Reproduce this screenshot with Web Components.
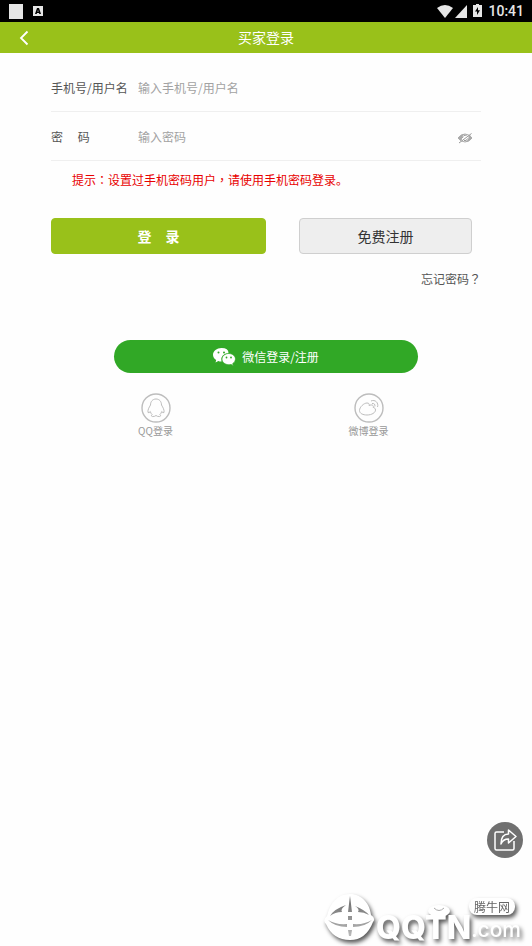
<!DOCTYPE html>
<html lang="zh-CN">
<head>
<meta charset="utf-8">
<meta name="viewport" content="width=device-width, initial-scale=1">
<title>买家登录</title>
<style>
  html, body { margin: 0; height: 100%; }
  body { background: #fefefe; font-family: "Noto Sans CJK SC", sans-serif; font-size: 12px; color: #555; }
</style>
</head>
<body>
<login-page></login-page>
<script>
const define = (name, html, init) => {
  const template = document.createElement('template');
  template.innerHTML = html;
  customElements.define(name, class extends HTMLElement {
    constructor() {
      super();
      this.attachShadow({ mode: 'open' }).append(template.content.cloneNode(true));
    }
    connectedCallback() { if (init) init(this, this.shadowRoot); }
  });
};

define('status-bar', `
<style>
  :host { display: flex; align-items: center; height: 22px; background: #000; color: #e6e6e6; padding: 0 8px; font: 500 14px/22px Roboto, sans-serif; }
  .grow { flex: 1; }
  svg { display: block; fill: #e6e6e6; }
  .left { display: flex; gap: 9px; align-items: center; }
  .right { display: flex; gap: 6px; align-items: center; }
  .signal { display: flex; gap: 2px; }
</style>
<div class="left">
  <svg width="16" height="16" viewBox="0 0 16 16"><path d="M1 1h14v15H1z"/></svg>
  <svg width="10" height="10" viewBox="0 0 10 10"><path fill-rule="evenodd" d="M0 0h10v10H0zM4 2 2 8h1.7l.3-1h2l.3 1H8L6 2zM5 3.7l.5 2h-1z"/></svg>
</div>
<div class="grow"></div>
<div class="right">
  <div class="signal">
    <svg width="16" height="13" viewBox="0 0 16 13"><path d="M8 13 0 3Q8-3 16 3z"/></svg>
    <svg width="12" height="13" viewBox="0 0 12 13"><path d="M12 0v13H0z"/></svg>
  </div>
  <svg width="9" height="14" viewBox="0 0 9 14"><path fill-rule="evenodd" d="M3 1V0h3v1h3v12H0V1h3zM5 3 2 7.500h2V11l3-4.800H5z"/></svg>
  <span>10:41</span>
</div>`);

define('title-bar', `
<style>
  :host { display: grid; grid-template-columns: 48px 1fr 48px; align-items: center; height: 31px; background: #99c11a; color: #fff; }
  h1 { margin: 0; font-size: 14px; font-weight: 400; line-height: 30px; height: 31px; text-align: center; }
  button { border: 0; background: none; padding: 0; height: 31px; color: inherit; display: grid; place-items: center; }
</style>
<button aria-label="返回"><svg width="10" height="16" viewBox="0 0 10 16"><path d="M8.500 1.500 2 8l6.500 6.500" fill="none" stroke="currentColor" stroke-width="1.8"/></svg></button>
<h1><slot></slot></h1>`);

define('field-row', `
<style>
  :host { display: flex; align-items: center; height: 48px; border-bottom: 1px solid #efefef; }
  label { flex: 0 0 87px; white-space: nowrap; }
  input { flex: 1; min-width: 0; border: 0; padding: 0; outline: 0; background: none; font: inherit; color: inherit; height: 24px; }
  input::placeholder { color: #a2a2a2; opacity: 1; }
</style>
<label for="field"></label><input id="field"><slot></slot>`, (el, root) => {
  const input = root.querySelector('input');
  root.querySelector('label').textContent = el.getAttribute('label');
  input.placeholder = el.getAttribute('placeholder');
  input.type = el.getAttribute('type') || 'text';
});

define('eye-toggle', `
<style>
  :host { display: block; padding: 3px 8px 0 0; }
  button { display: block; border: 0; padding: 0; background: none; }
  svg { display: block; }
</style>
<button aria-label="显示密码"><svg width="16" height="12" viewBox="0 0 16 12"><path d="M1 6Q8-2 15 6 8 14 1 6z" fill="#fff" stroke="#aaa"/><path d="M1 6Q4 1.500 8.500 2 4.500 3 5 7.500L3.500 9zM15 6q-3 4.500-7 4 4-1.500 3.500-6L13 3z" fill="#aaa"/><path d="M5.500 6a2.800 2.800 0 0 1 4-2.500M10.500 6.500a2.800 2.800 0 0 1-3.500 2" fill="none" stroke="#999"/><path d="M2 11 14.500 1.500" stroke="#999"/></svg></button>`);

define('action-button', `
<style>
  :host { display: block; }
  button { box-sizing: border-box; width: 100%; height: 36px; border: 1px solid #cfcfcf; border-radius: 4px; background: #eee; color: #333; font: inherit; font-size: 14px; line-height: 20px; padding: 0; }
  :host([kind="primary"]) button { border-color: #99c11a; background: #99c11a; color: #fff; font-weight: 700; }
  :host([kind="wechat"]) button { height: 33px; border: 0; border-radius: 17px; background: #31a826; color: #fff; font-size: 12px; display: flex; gap: 6px; align-items: center; justify-content: center; }
</style>
<button><slot></slot></button>`);

define('social-link', `
<style>
  :host { display: block; }
  a { display: flex; flex-direction: column; align-items: center; color: #999; text-decoration: none; font-size: 10px; line-height: 16px; }
</style>
<a href="#"><slot name="icon"></slot><slot></slot></a>`);

define('share-button', `
<style>
  :host { position: fixed; right: 9px; bottom: 88px; }
  button { display: grid; place-items: center; width: 36px; height: 36px; border: 0; border-radius: 50%; padding: 0; background: #707070; }
</style>
<button aria-label="分享"><svg width="24" height="24" viewBox="0 0 24 24" fill="none" stroke="#fff" stroke-width="1.5" stroke-linejoin="round"><path d="M11 4H3.500Q2 4 2 5.500v15Q2 22 3.500 22h16q1.500 0 1.500-1.500V13"/><path d="M8 16Q8 6 15.500 6V2L23 8.500 15.500 15v-4Q10 11 8 16z"/></svg></button>`);

define('site-mark', `
<style>
  :host { position: fixed; right: 0; bottom: 0; width: 212px; height: 62px; color: #fff; pointer-events: none; filter: drop-shadow(2px 3px 2px rgba(0,0,0,.65)); }
  svg { position: absolute; left: 0; top: 0; }
  .name { position: absolute; left: 56px; bottom: 6px; display: flex; align-items: flex-end; font: 800 32px/24px Inter, sans-serif; }
  .com { font-weight: 500; font-size: 21px; line-height: 20px; }
  .badge { position: absolute; right: 17px; top: 14px; padding: 0 5px; border-radius: 8px; background: #fff; color: #666; font-size: 12px; line-height: 17px; }
</style>
<svg width="140" height="62" viewBox="0 0 140 62">
  <defs><linearGradient id="g" x2="0" y2="1"><stop stop-color="#666"/><stop offset="1" stop-color="#bbb"/></linearGradient></defs>
  <path d="M30 10C42 10 50 20 51 31Q56 34 53 38 46 56 30 56 13 56 6 40 2 36 7 32C10 19 18 10 30 10z" fill="#fff"/>
  <path d="M30 12 32 28H28zM10 32Q14 25 26 21 20 25 22 28 15 28 10 32zM49 31Q45 26 35 22 40 25 38 28 44 28 49 31zM8 36Q16 41 27 40v3Q15 43 8 36zM52 36Q44 41 33 40v3Q45 43 52 36zM28 32h4v4h-4zM28 46h4l-1 6h-2z" fill="url(#g)"/>
  <ellipse cx="119" cy="27" rx="11" ry="6" fill="#fff"/><path d="M114 24q5 5 10 0" fill="none" stroke="#aaa"/>
</svg>
<div class="name"><span>QQTN</span><span class="com">.com</span></div>
<span class="badge">腾牛网</span>`);

define('login-page', `
<style>
  :host { display: block; min-height: 100%; }
  form { display: block; margin: 0; padding-top: 10px; }
  .fields { margin: 0 51px; }
  .tc { font-family: "Noto Sans CJK TC", sans-serif; }
  .tip { margin: 0 21px; padding-top: 9px; line-height: 20px; color: #e80000; }
  .actions { display: grid; grid-template-columns: 215fr 173fr; gap: 33px; margin: 28px 60px 0 51px; }
  .forgot { display: flex; justify-content: flex-end; margin: 15px 51px 0; }
  .forgot a { color: #555; text-decoration: none; line-height: 20px; }
  .wechat { width: 57%; margin: 51px auto 0; }
  .social { display: grid; grid-template-columns: 1fr 1fr; margin: 20px 57px 0 49px; }
  svg { display: block; }
</style>
<status-bar></status-bar>
<title-bar>买家登录</title-bar>
<form>
  <div class="fields">
    <field-row label="手机号/用户名" placeholder="输入手机号/用户名"></field-row>
    <field-row label="密&emsp;&nbsp;码" placeholder="输入密码" type="password"><eye-toggle></eye-toggle></field-row>
    <p class="tip">提示<span class="tc" lang="zh-TW">：</span>设置过手机密码用户<span class="tc" lang="zh-TW">，</span>请使用手机密码登录。</p>
  </div>
  <div class="actions">
    <action-button kind="primary">登　录</action-button>
    <action-button>免费注册</action-button>
  </div>
  <div class="forgot"><a href="#">忘记密码<span class="tc" lang="zh-TW">？</span></a></div>
  <action-button class="wechat" kind="wechat">
    <svg width="23" height="18" viewBox="0 0 23 18"><path d="M8.500 0C3.800 0 0 3 0 6.800 0 9 1.200 10.800 3.200 12L2.500 14.500 5.300 13Q7 13.600 8.500 13.500 7 6 15.500 5 15.500 0 8.500 0z" fill="#fff"/><path d="M15.800 5.500c-3.800 0-6.800 2.500-6.800 5.600s3 5.600 6.800 5.600q1.200 0 2.200-.300l2.300 1.300-.6-2.100Q22.500 13.900 22.500 11.100c0-3.100-3-5.600-6.700-5.600z" fill="#fff" stroke="#31a826" stroke-width=".7"/><g fill="#31a826"><circle cx="5.500" cy="4.500" r="1"/><circle cx="11" cy="4.500" r="1"/><circle cx="13.500" cy="9.500" r=".9"/><circle cx="18" cy="9.500" r=".9"/></g></svg>
    <span>微信登录/注册</span>
  </action-button>
  <div class="social">
    <social-link><svg slot="icon" width="30" height="30" viewBox="0 0 30 30" fill="none" stroke="#bdbdbd"><circle cx="15" cy="15" r="14" stroke-width="1.400"/><path d="M15 6c-3.500 0-5.500 2.700-5.500 6-1.500 2.500-3 5-2.500 7.500q1 .8 2.300-1 .5 2 1.800 3-1.800 1.500.2 2 2.200.3 3.700-1 1.500 1.300 3.700 1 2-.5.2-2 1.300-1 1.800-3 1.300 1.800 2.300 1c.5-2.500-1-5-2.500-7.500 0-3.300-2-6-5.500-6z"/></svg>QQ登录</social-link>
    <social-link><svg slot="icon" width="30" height="30" viewBox="0 0 30 30" fill="none" stroke="#bdbdbd"><circle cx="15" cy="15" r="14" stroke-width="1.400"/><path d="M13 10c-3 0-7.500 4-7.500 7.500 0 3 3.500 4.500 7.500 4.500 5 0 8.500-2.500 8.500-5 0-1.500-1-2.300-2.300-2.600.8-2-1.200-3.200-4.200-1.900.6-1.500-.2-2.500-2-2.500zM17 8c4-2 8 2 6.500 6M18 10.500c2-.5 3.500 1 2.800 3"/></svg>微博登录</social-link>
  </div>
</form>
<share-button></share-button>
<site-mark></site-mark>`);
</script>
</body>
</html>
